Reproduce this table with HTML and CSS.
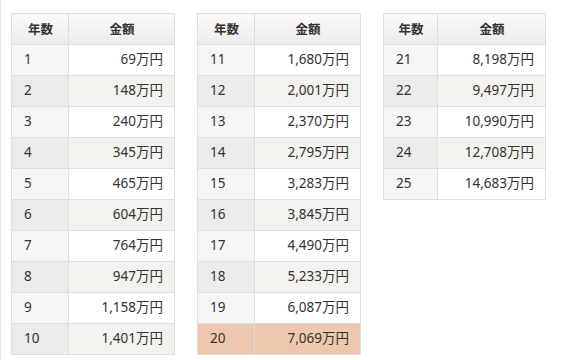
FILE: index.html
```html
<!DOCTYPE html>
<html lang="ja">
<head>
<meta charset="utf-8">
<link rel="stylesheet" href="styles.css">
</head>
<body>
<div class="page">
  <table class="tbl">
    <colgroup><col class="c1"><col class="c2"></colgroup>
    <thead><tr><th>年数</th><th>金額</th></tr></thead>
    <tbody>
      <tr><td>1</td><td>69万円</td></tr>
      <tr><td>2</td><td>148万円</td></tr>
      <tr><td>3</td><td>240万円</td></tr>
      <tr><td>4</td><td>345万円</td></tr>
      <tr><td>5</td><td>465万円</td></tr>
      <tr><td>6</td><td>604万円</td></tr>
      <tr><td>7</td><td>764万円</td></tr>
      <tr><td>8</td><td>947万円</td></tr>
      <tr><td>9</td><td>1,158万円</td></tr>
      <tr><td>10</td><td>1,401万円</td></tr>
    </tbody>
  </table>
  <table class="tbl">
    <colgroup><col class="c1"><col class="c2"></colgroup>
    <thead><tr><th>年数</th><th>金額</th></tr></thead>
    <tbody>
      <tr><td>11</td><td>1,680万円</td></tr>
      <tr><td>12</td><td>2,001万円</td></tr>
      <tr><td>13</td><td>2,370万円</td></tr>
      <tr><td>14</td><td>2,795万円</td></tr>
      <tr><td>15</td><td>3,283万円</td></tr>
      <tr><td>16</td><td>3,845万円</td></tr>
      <tr><td>17</td><td>4,490万円</td></tr>
      <tr><td>18</td><td>5,233万円</td></tr>
      <tr><td>19</td><td>6,087万円</td></tr>
      <tr class="hl"><td>20</td><td>7,069万円</td></tr>
    </tbody>
  </table>
  <table class="tbl narrow">
    <colgroup><col class="c1"><col class="c2"></colgroup>
    <thead><tr><th>年数</th><th>金額</th></tr></thead>
    <tbody>
      <tr><td>21</td><td>8,198万円</td></tr>
      <tr><td>22</td><td>9,497万円</td></tr>
      <tr><td>23</td><td>10,990万円</td></tr>
      <tr><td>24</td><td>12,708万円</td></tr>
      <tr><td>25</td><td>14,683万円</td></tr>
    </tbody>
  </table>
</div>
</body>
</html>
```
FILE: styles.css
```css
html, body {
  margin: 0;
  padding: 0;
  background: #fff;
}
.page {
  box-sizing: border-box;
  height: 360px;
  border-left: 1px solid #e4e4e4;
  padding: 13px 0 0 10px;
  display: flex;
  align-items: flex-start;
  gap: 22px;
  font-family: "Noto Sans", "Noto Sans CJK JP", sans-serif;
  color: #333;
  font-size: 13.5px;
}
.tbl {
  border-collapse: collapse;
  table-layout: fixed;
  width: 163px;
}
.tbl .c1 { width: 57px; }
.tbl .c2 { width: 106px; }
.tbl.narrow { width: 162px; }
.tbl.narrow .c1 { width: 54px; }
.tbl.narrow .c2 { width: 108px; }
.tbl th, .tbl td {
  border: 1px solid #dedede;
  height: 31px;
  padding: 0 11px 0 12px;
  box-sizing: border-box;
  line-height: 1;
}
.tbl th {
  font-family: "Noto Sans CJK JP", sans-serif;
  font-weight: bold;
  text-align: center;
  background: linear-gradient(#fbfbfb, #ebebeb);
  font-size: 12.5px;
}
.tbl td:first-child {
  text-align: left;
  background: #f6f6f6;
}
.tbl td:last-child {
  text-align: right;
  background: #fff;
}
.tbl tbody tr:nth-child(even) td:first-child {
  background: #ebebeb;
}
.tbl tbody tr:nth-child(even) td:last-child {
  background: #f3f2ee;
}
.tbl tbody tr.hl td:first-child,
.tbl tbody tr.hl td:last-child {
  background: #eec8ae;
}
```
